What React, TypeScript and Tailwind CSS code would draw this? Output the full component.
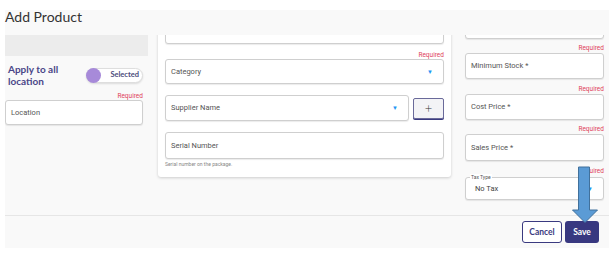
import React from "react";

const label = "font-['Roboto',sans-serif] text-[7.5px] text-[#555]";

function Required({ className = "" }: { className?: string }) {
  return (
    <div className={`text-right font-['Roboto',sans-serif] text-[6.5px] leading-[8px] text-[#e0435a] ${className}`}>
      Required
    </div>
  );
}

function Field({ text, className = "" }: { text?: string; className?: string }) {
  return (
    <div
      className={`flex items-center rounded-[3px] border border-[#cfcfcf] bg-white pl-[5px] shadow-[0_1px_1px_rgba(0,0,0,0.08)] ${className}`}
    >
      {text && <span className={label}>{text}</span>}
    </div>
  );
}

function Select({ text, className = "" }: { text: string; className?: string }) {
  return (
    <div
      className={`flex items-center justify-between rounded-[3px] border border-[#cfcfcf] bg-white pl-[5px] pr-[10px] shadow-[0_1px_1px_rgba(0,0,0,0.08)] ${className}`}
    >
      <span className={label}>{text}</span>
      <span className="text-[6px] leading-none text-[#2196f3]">▼</span>
    </div>
  );
}

export default function App() {
  return (
    <div className="relative h-[259px] w-[609px] overflow-hidden bg-white font-['Lato',sans-serif]">
      {/* Page panel */}
      <div className="ml-[5px] mt-[10px] flex h-[238px] flex-col bg-[#f9f9f9]">
        {/* Header */}
        <div className="h-[25px] shrink-0">
          <h1 className="-mt-[3px] text-[14px] leading-[20px] text-[#333]">Add Product</h1>
        </div>

        {/* Scrolled content */}
        <div className="flex h-[180px] shrink-0 overflow-hidden">
          {/* Left column */}
          <div className="flex w-[143px] shrink-0 flex-col">
            <div className="h-[21px] bg-[#ececec]" />
            <div className="mt-[7px] flex w-[138px] items-center justify-between">
              <div className="pl-[3px] text-[10px] font-bold leading-[12px] text-[#4a4688]">
                Apply to all
                <br />
                location
              </div>
              <div className="relative flex h-[15px] w-[57px] items-center justify-end rounded-full border border-[#dedede] bg-white pr-[3px] shadow-[0_1px_2px_rgba(0,0,0,0.12)]">
                <span className="absolute -left-px -top-px h-[15px] w-[15px] rounded-full bg-[#a78ad9]" />
                <span className="text-[7.5px] font-bold text-[#4b4b7b]">Selected</span>
              </div>
            </div>
            <Required className="mt-[5px] w-[138px]" />
            <Field text="Location" className="h-[25px] w-[138px]" />
          </div>

          {/* Middle card */}
          <div className="ml-[10px] -mt-[25px] h-[167px] w-[293px] shrink-0 rounded-[3px] bg-white px-[7px] pt-[8px] shadow-[0_1px_3px_rgba(0,0,0,0.18)]">
            <Field className="h-[26px]" />
            <Required className="mt-[7px]" />
            <Select text="Category" className="h-[25px]" />
            <div className="mt-[11px] flex items-center gap-[4px]">
              <Select text="Supplier Name" className="h-[26px] flex-1" />
              <button className="flex h-[21px] w-[31px] items-center justify-center rounded-[2px] border border-[#6a6a9a] bg-[#f3f3f6] text-[13px] font-light leading-none text-[#333] shadow-[0_1px_0_#3a3a80]">
                +
              </button>
            </div>
            <Field text="Serial Number" className="mt-[11px] h-[27px]" />
            <div className="mt-[2px] font-['Roboto',sans-serif] text-[5px] leading-[6px] text-[#888]">
              Serial number on the package.
            </div>
          </div>

          {/* Right column */}
          <div className="ml-[14px] -mt-[22px] flex w-[139px] shrink-0 flex-col">
            <Field className="h-[26px]" />
            <Required className="mt-[5px]" />
            <Field text="Minimum Stock *" className="mt-[1px] h-[26px]" />
            <Required className="mt-[6px]" />
            <Field text="Cost Price *" className="mt-[1px] h-[26px]" />
            <Required className="mt-[5px]" />
            <Field text="Sales Price *" className="mt-[1px] h-[27px]" />
            <Required className="mt-[6px]" />
            <div className="relative mt-[2px] flex h-[23px] items-center justify-between rounded-[3px] border border-[#cfcfcf] bg-white pl-[9px] pr-[10px] shadow-[0_1px_1px_rgba(0,0,0,0.08)]">
              <span className="absolute -top-[4px] left-[4px] bg-white px-[1px] font-['Roboto',sans-serif] text-[5px] leading-[6px] text-[#555]">
                Tax Type
              </span>
              <span className="font-['Roboto',sans-serif] text-[7.5px] text-[#444]">No Tax</span>
              <span className="text-[6px] leading-none text-[#2196f3]">▼</span>
            </div>
          </div>
        </div>

        {/* Footer */}
        <div className="flex h-[33px] shrink-0 items-center justify-end gap-[3px] border-t border-[#e6e6e6] pr-[10px]">
          <button className="h-[22px] w-[40px] rounded-[3px] border border-[#3a3a80] bg-white text-[8.5px] font-bold text-[#3a3a80]">
            Cancel
          </button>
          <button className="h-[22px] w-[34px] rounded-[3px] bg-[#383880] text-[8.5px] font-bold text-white">
            Save
          </button>
        </div>
      </div>

      {/* Annotation arrow */}
      <svg className="absolute left-[572px] top-[166px]" width="27" height="58" viewBox="0 0 27 58">
        <polygon
          points="6.5,1 17.5,1 17.5,44 25.5,44 13,56.5 0.5,44 6.5,44"
          fill="#5b9bd5"
          stroke="#41719c"
          strokeWidth="1"
        />
      </svg>
    </div>
  );
}
